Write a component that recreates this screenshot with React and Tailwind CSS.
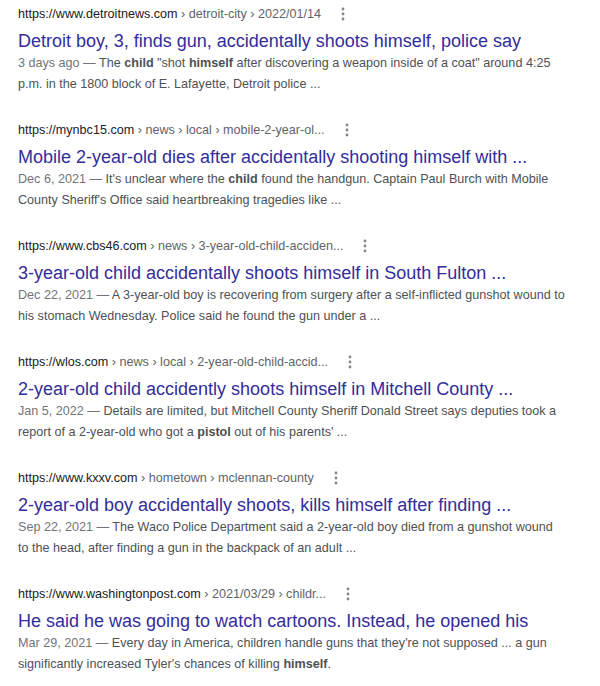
import React from "react";

const results = [
  {
    domain: "https://www.detroitnews.com",
    path: " › detroit-city › 2022/01/14",
    title: "Detroit boy, 3, finds gun, accidentally shoots himself, police say",
    date: "3 days ago",
    snippet: [
      "The ",
      { b: "child" },
      " \"shot ",
      { b: "himself" },
      " after discovering a weapon inside of a coat\" around 4:25 p.m. in the 1800 block of E. Lafayette, Detroit police ...",
    ],
  },
  {
    domain: "https://mynbc15.com",
    path: " › news › local › mobile-2-year-ol...",
    title: "Mobile 2-year-old dies after accidentally shooting himself with ...",
    date: "Dec 6, 2021",
    snippet: [
      "It's unclear where the ",
      { b: "child" },
      " found the handgun. Captain Paul Burch with Mobile County Sheriff's Office said heartbreaking tragedies like ...",
    ],
  },
  {
    domain: "https://www.cbs46.com",
    path: " › news › 3-year-old-child-acciden...",
    title: "3-year-old child accidentally shoots himself in South Fulton ...",
    date: "Dec 22, 2021",
    snippet: [
      "A 3-year-old boy is recovering from surgery after a self-inflicted gunshot wound to his stomach Wednesday. Police said he found the gun under a ...",
    ],
  },
  {
    domain: "https://wlos.com",
    path: " › news › local › 2-year-old-child-accid...",
    title: "2-year-old child accidently shoots himself in Mitchell County ...",
    date: "Jan 5, 2022",
    snippet: [
      "Details are limited, but Mitchell County Sheriff Donald Street says deputies took a report of a 2-year-old who got a ",
      { b: "pistol" },
      " out of his parents' ...",
    ],
  },
  {
    domain: "https://www.kxxv.com",
    path: " › hometown › mclennan-county",
    title: "2-year-old boy accidentally shoots, kills himself after finding ...",
    date: "Sep 22, 2021",
    snippet: [
      "The Waco Police Department said a 2-year-old boy died from a gunshot wound to the head, after finding a gun in the backpack of an adult ...",
    ],
  },
  {
    domain: "https://www.washingtonpost.com",
    path: " › 2021/03/29 › childr...",
    title: "He said he was going to watch cartoons. Instead, he opened his",
    date: "Mar 29, 2021",
    snippet: [
      "Every day in America, children handle guns that they're not supposed ... a gun significantly increased Tyler's chances of killing ",
      { b: "himself" },
      ".",
    ],
  },
];

function Dots() {
  return (
    <svg width="4" height="14" viewBox="0 0 4 14" className="ml-[20px] shrink-0">
      <circle cx="2" cy="2" r="1.4" fill="#80868b" />
      <circle cx="2" cy="7" r="1.4" fill="#80868b" />
      <circle cx="2" cy="12" r="1.4" fill="#80868b" />
    </svg>
  );
}

export default function App() {
  return (
    <div className="w-[600px] h-[686px] bg-white overflow-hidden pt-[5px] pl-[18px] flex flex-col gap-[26px] font-['Liberation_Sans',Arial,sans-serif]">
      {results.map((r, i) => (
        <div key={i} className="flex flex-col">
          <div className="flex items-center h-[18px] text-[12.6px] leading-[18px] whitespace-nowrap">
            <span>
              <span className="text-[#202124]">{r.domain}</span>
              <span className="text-[#5f6368]">{r.path}</span>
            </span>
            <Dots />
          </div>
          <div className="mt-[6px] text-[18px] leading-[24px] text-[#332d9c] whitespace-nowrap">
            {r.title}
          </div>
          <p className="text-[12.6px] leading-[21px] text-[#4d5156] w-[548px]">
            <span className="text-[#70757a]">{r.date} — </span>
            {r.snippet.map((s, j) =>
              typeof s === "string" ? (
                s
              ) : (
                <b key={j} className="font-bold text-[#4d5156]">
                  {s.b}
                </b>
              )
            )}
          </p>
        </div>
      ))}
    </div>
  );
}
